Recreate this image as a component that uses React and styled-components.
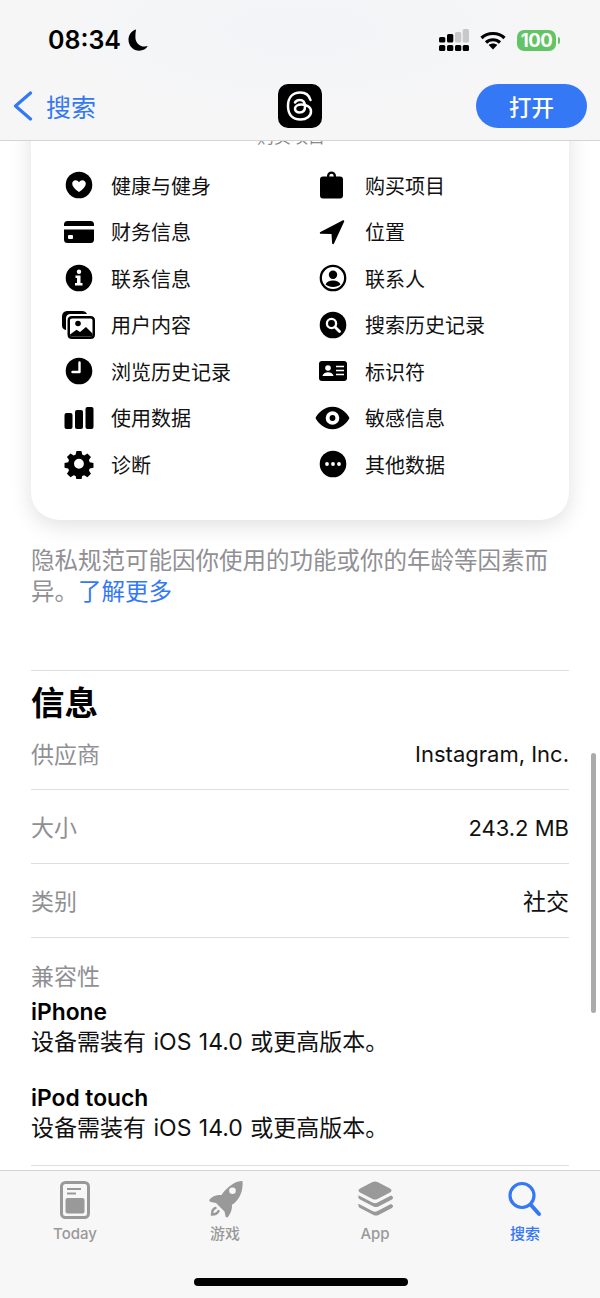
import React from 'react'
import styled, { createGlobalStyle } from 'styled-components'

const GlobalStyle = createGlobalStyle`
  html, body {
    margin: 0;
    padding: 0;
    background: #fff;
  }
  body {
    font-family: "Inter", "Noto Sans CJK SC", sans-serif;
    color: #000;
  }
`

const PRIVACY = [
  ['heart', '健康与健身', 'bag', '购买项目'],
  ['card', '财务信息', 'location', '位置'],
  ['info', '联系信息', 'contact', '联系人'],
  ['photos', '用户内容', 'search', '搜索历史记录'],
  ['clock', '浏览历史记录', 'idcard', '标识符'],
  ['bars', '使用数据', 'eye', '敏感信息'],
  ['gear', '诊断', 'more', '其他数据'],
]

const Glyph = ({ name }) => {
  switch (name) {
    case 'heart':
      return (
        <svg width="30" height="30" viewBox="0 0 30 30">
          <circle cx="15" cy="15" r="13.300" />
          <path fill="#fff" d="M15 22c-4.200-3-6.800-5.400-6.800-8.300 0-2.100 1.600-3.500 3.400-3.500 1.400 0 2.700.8 3.400 2.100.7-1.300 2-2.100 3.400-2.100 1.800 0 3.400 1.400 3.400 3.500 0 2.900-2.600 5.300-6.800 8.300z" />
        </svg>
      )
    case 'card':
      return (
        <svg width="30" height="30" viewBox="0 0 30 30">
          <path d="M3.500 4h23A3.500 3.500 0 0 1 30 7.500V9H0V7.500A3.500 3.500 0 0 1 3.500 4zM0 12.500h30v10a3.500 3.500 0 0 1-3.500 3.500h-23A3.500 3.500 0 0 1 0 22.500z" />
          <rect x="4" y="18" width="5" height="4" rx="1" fill="#fff" />
        </svg>
      )
    case 'info':
      return (
        <svg width="30" height="30" viewBox="0 0 30 30">
          <circle cx="15" cy="15" r="13.300" />
          <circle cx="15" cy="8.800" r="2.200" fill="#fff" />
          <path fill="#fff" d="M11.500 12.500h5v7.500h2v2.500h-7.500V20h2v-5h-1.500z" />
        </svg>
      )
    case 'photos':
      return (
        <svg width="33" height="28" viewBox="0 0 33 28">
          <path d="M6 0h14c2.500 0 4.200 1 5 3H8.500C5.500 3 4 4.500 4 7.500V19C1.500 18.500 0 17 0 14.500V6c0-4 2-6 6-6z" />
          <path fillRule="evenodd" d="M10 5h18.500c3 0 4.500 1.500 4.500 4.500v14c0 3-1.500 4.500-4.500 4.500H10c-3 0-4.500-1.500-4.500-4.500v-14C5.500 6.500 7 5 10 5zm0 2.500c-1.300 0-2 .7-2 2v14c0 1.300.7 2 2 2h18.500c1.300 0 2-.7 2-2v-14c0-1.300-.7-2-2-2z" />
          <circle cx="16" cy="12.500" r="2.800" />
          <path d="M8 23.500l6.500-4.800 3.500 2.400 6-5.200 6.500 6.600v1.500c0 1-.7 1.500-2 1.500H10c-1.300 0-2-.5-2-2z" />
        </svg>
      )
    case 'clock':
      return (
        <svg width="30" height="30" viewBox="0 0 30 30">
          <circle cx="15" cy="15" r="13.300" />
          <path fill="none" stroke="#fff" strokeWidth="2.400" strokeLinecap="round" strokeLinejoin="round" d="M15.500 6.500v9.500H8.500" />
        </svg>
      )
    case 'bars':
      return (
        <svg width="30" height="30" viewBox="0 0 30 30">
          <rect x="0.500" y="10" width="8" height="16" rx="2" />
          <rect x="11" y="7" width="8" height="19" rx="2" />
          <rect x="21.500" y="4" width="8" height="22" rx="2" />
        </svg>
      )
    case 'gear':
      return (
        <svg width="30" height="30" viewBox="0 0 30 30">
          <path fillRule="evenodd" d="M12.300 1.500h5.400l.8 3.900 2.200 1 3.400-2.200 3.800 3.800-2.200 3.400.9 2.200 4 .8v5.200l-4 .8-.9 2.200 2.200 3.400-3.800 3.800-3.400-2.200-2.200.9-.8 4h-5.400l-.8-4-2.200-.9-3.400 2.200-3.800-3.800 2.200-3.400-.9-2.200-3.900-.8v-5.200l3.900-.8.900-2.200-2.200-3.400 3.800-3.800 3.400 2.200 2.200-1zM15 10a5.300 5.300 0 1 0 0 10.600A5.300 5.300 0 0 0 15 10z" transform="translate(1 0.500) scale(.93)" />
        </svg>
      )
    case 'bag':
      return (
        <svg width="30" height="30" viewBox="0 0 30 30">
          <path fillRule="evenodd" d="M10.500 7V6.500a4.500 4.500 0 0 1 9 0V7h4c2 0 3 1 3 3v16c0 2-1 3-3 3h-17c-2 0-3-1-3-3V10c0-2 1-3 3-3zm2.300 0h4.400v-.5a2.200 2.200 0 0 0-4.400 0z" transform="translate(-1.500 -.5)" />
        </svg>
      )
    case 'location':
      return (
        <svg width="30" height="30" viewBox="0 0 30 30">
          <path d="M25 3.200c.8-.3 1.500.4 1.200 1.200L16 26.500c-.4 1-1.800.8-1.900-.3L13.500 17 2.800 16.800c-1.100 0-1.400-1.500-.4-1.900z" />
        </svg>
      )
    case 'contact':
      return (
        <svg width="30" height="30" viewBox="0 0 30 30">
          <circle cx="15" cy="15" r="12.200" fill="none" stroke="#000" strokeWidth="2.300" />
          <circle cx="15" cy="11.800" r="4.200" />
          <path d="M7.500 21.500c.9-2.700 4-4 7.500-4s6.600 1.300 7.500 4c-1.800 1.600-4.500 2.500-7.500 2.500s-5.700-.9-7.500-2.500z" />
        </svg>
      )
    case 'search':
      return (
        <svg width="30" height="30" viewBox="0 0 30 30">
          <circle cx="15" cy="15" r="13.300" />
          <circle cx="13.500" cy="13.500" r="4.600" fill="none" stroke="#fff" strokeWidth="2.300" />
          <path stroke="#fff" strokeWidth="2.800" strokeLinecap="round" d="M17 17l4.500 4.500" />
        </svg>
      )
    case 'idcard':
      return (
        <svg width="30" height="30" viewBox="0 0 30 30">
          <rect x="1" y="5" width="28" height="20" rx="3" />
          <circle cx="10" cy="12" r="2.800" fill="#fff" />
          <path fill="#fff" d="M4.500 20c.3-2.500 2.700-3.800 5.500-3.800s5.200 1.300 5.500 3.800z" />
          <path stroke="#fff" strokeWidth="1.700" d="M18 10.500h8M18 14.500h8M18 18.500h8" />
        </svg>
      )
    case 'eye':
      return (
        <svg width="36" height="30" viewBox="0 0 36 30">
          <path fillRule="evenodd" d="M18 3.500c8.500 0 14.800 6.300 17.500 11.500C32.800 20.200 26.500 26.500 18 26.500S3.200 20.200.5 15C3.200 9.800 9.500 3.500 18 3.500zm0 4.500a7 7 0 1 0 0 14 7 7 0 0 0 0-14z" />
          <circle cx="18" cy="15" r="3" />
        </svg>
      )
    case 'more':
      return (
        <svg width="30" height="30" viewBox="0 0 30 30">
          <circle cx="15" cy="15" r="13.300" />
          <circle cx="9" cy="15" r="1.900" fill="#fff" />
          <circle cx="15" cy="15" r="1.900" fill="#fff" />
          <circle cx="21" cy="15" r="1.900" fill="#fff" />
        </svg>
      )
    default:
      return null
  }
}

const App = () => {
  return (
    <Page>
      <GlobalStyle />
      <Header>
        <StatusBar>
          <Clock>
            08:34
            <svg width="20" height="22" viewBox="0 0 20 22">
              <path d="M8 .5C3.500 1.800.5 5.800.5 10.800.5 16.900 5.300 21.800 11.300 21.800c3.700 0 6.800-1.800 8.500-4.700-1 .3-2 .5-3 .5-5.400 0-9.400-4.200-9.400-9.400C7.400 5.800 7.500 3 8 .5z" />
            </svg>
          </Clock>
          <StatusIcons>
            <svg width="30" height="22" viewBox="0 0 30 22">
              <rect x="0" y="8" width="6.300" height="5.500" rx="1.500" />
              <rect x="0" y="16" width="6.300" height="6" rx="1.500" />
              <rect x="8" y="5" width="6.300" height="8.500" rx="1.500" />
              <rect x="8" y="16" width="6.300" height="6" rx="1.500" />
              <rect x="16" y="3" width="6.300" height="10.500" rx="1.500" fill="#c8c8c8" />
              <rect x="16" y="16" width="6.300" height="6" rx="1.500" />
              <rect x="23.700" y="0" width="6.300" height="13.500" rx="1.500" fill="#c8c8c8" />
              <rect x="23.700" y="16" width="6.300" height="6" rx="1.500" />
            </svg>
            <svg width="26" height="19" viewBox="0 0 26 19">
              <path fill="none" stroke="#000" strokeWidth="3.200" d="M1.500 7C7.500 1 18.500 1 24.500 7M6 11.500c4-3.700 10-3.700 14 0" />
              <path d="M13 18.500l-4.300-4.400c2.400-2 6.200-2 8.600 0z" />
            </svg>
            <Battery>
              100
              <BatteryTip />
            </Battery>
          </StatusIcons>
        </StatusBar>
        <NavBar>
          <BackLink>
            <svg width="20" height="30" viewBox="0 0 20 30">
              <path fill="none" stroke="#3478f6" strokeWidth="3.200" strokeLinecap="round" strokeLinejoin="round" d="M17.500 2L2.500 15l15 13" />
            </svg>
            <span>搜索</span>
          </BackLink>
          <AppIcon>
            <svg width="28" height="30" viewBox="0 0 28 30">
              <path fill="none" stroke="#fff" strokeWidth="2.500" strokeLinecap="round" d="M24.500 9C23 4 19.500 1.500 14.500 1.500 6.500 1.500 2 6.500 2 15s4.500 13.500 12.500 13.500c6 0 10.500-3.500 10.500-8 0-4.500-4.500-7-9.500-7-4 0-6.500 1.800-6.500 4.300 0 2.300 2 3.700 4.500 3.700 3.500 0 5.500-2.300 5.500-6 0-4-2-6.500-5.300-6.500-2.200 0-3.700.8-4.700 2.500" />
            </svg>
          </AppIcon>
          <OpenButton>打开</OpenButton>
        </NavBar>
      </Header>

      <Scroller>
        <PrivacyCard>
          <CardTitle>购买项目</CardTitle>
          <PrivacyGrid>
            {PRIVACY.map(([lIcon, lText, rIcon, rText]) => (
              <React.Fragment key={lText}>
                <PrivacyItem>
                  <IconSlot><Glyph name={lIcon} /></IconSlot>
                  <span>{lText}</span>
                </PrivacyItem>
                <PrivacyItem>
                  <IconSlot><Glyph name={rIcon} /></IconSlot>
                  <span>{rText}</span>
                </PrivacyItem>
              </React.Fragment>
            ))}
          </PrivacyGrid>
        </PrivacyCard>

        <Note>
          隐私规范可能因你使用的功能或你的年龄等因素而异。<NoteLink>了解更多</NoteLink>
        </Note>

        <InfoSection>
          <SectionTitle>信息</SectionTitle>
          <InfoRow $first>
            <InfoLabel>供应商</InfoLabel>
            <InfoValue>Instagram, Inc.</InfoValue>
          </InfoRow>
          <InfoRow>
            <InfoLabel>大小</InfoLabel>
            <InfoValue>243.2 MB</InfoValue>
          </InfoRow>
          <InfoRow>
            <InfoLabel>类别</InfoLabel>
            <InfoValue $cjk>社交</InfoValue>
          </InfoRow>
          <CompatBlock>
            <InfoLabel>兼容性</InfoLabel>
            <Device>
              <DeviceName>iPhone</DeviceName>
              <DeviceText>设备需装有 iOS 14.0 或更高版本。</DeviceText>
            </Device>
            <Device>
              <DeviceName>iPod touch</DeviceName>
              <DeviceText>设备需装有 iOS 14.0 或更高版本。</DeviceText>
            </Device>
          </CompatBlock>
        </InfoSection>
        <ScrollThumb />
      </Scroller>

      <TabBar>
        <Tabs>
          <Tab>
            <svg width="34" height="40" viewBox="0 0 34 40">
              <rect x="3.500" y="1.500" width="27" height="35" rx="4" fill="none" stroke="#999" strokeWidth="3" />
              <rect x="9" y="7" width="14" height="2" fill="#999" />
              <rect x="9" y="11.500" width="9" height="2" fill="#999" />
              <rect x="7.500" y="17" width="19" height="15.500" rx="2" fill="#999" />
            </svg>
            <TabLabel>Today</TabLabel>
          </Tab>
          <Tab>
            <svg width="38" height="40" viewBox="0 0 38 40">
              <path fill="#999" fillRule="evenodd" d="M36.500 0c.6 7-1 15-7 21-1 1-2 1.800-3.500 2.700.3 4-1 8-3.500 11.500-1 1.500-2.500 1.800-3-.2l-1-4.500-8.500-8.500-5-1c-1.900-.4-2.300-1.600-1-3 3-3 7-4.500 11.500-4 1-1.600 2-3 3.200-4.200C24.500 4 29.500 0 36.500 0zM26.500 6.500a3.300 3.300 0 1 0 0 6.600 3.300 3.300 0 0 0 0-6.600z" />
              <path fill="none" stroke="#999" strokeWidth="2.400" strokeLinecap="round" d="M9.500 27c-2 .5-3.500 2.500-3.500 6.500 3.500 0 5.500-1 6.500-3.500" />
            </svg>
            <TabLabel>游戏</TabLabel>
          </Tab>
          <Tab>
            <svg width="38" height="40" viewBox="0 0 36 40">
              <path fill="#999" d="M15.500 1c1.600-.8 3.400-.8 5 0l12.500 6.500c2 1 2 3 0 4L20.500 18c-1.600.8-3.400.8-5 0L3 11.500c-2-1-2-3 0-4z" />
              <path fill="#999" d="M.5 15.500l1.500-1 14 7.200c1.300.6 2.700.6 4 0l14-7.200 1.500 1c1 1 .6 2.300-1 3.200l-13 6.700c-1.600.8-3.400.8-5 0l-13-6.700c-1.600-.9-3-2.200-1.500-3.200z" />
              <path fill="#999" d="M.5 24l1.500-1 14 7.200c1.300.6 2.700.6 4 0l14-7.200 1.500 1c1 1 .6 2.300-1 3.200l-13 6.700c-1.600.8-3.400.8-5 0l-13-6.700c-1.600-.9-3-2.200-1.500-3.200z" />
            </svg>
            <TabLabel>App</TabLabel>
          </Tab>
          <Tab>
            <svg width="36" height="40" viewBox="0 0 36 40">
              <circle cx="15" cy="14.500" r="12" fill="none" stroke="#3478f6" strokeWidth="3.200" />
              <path stroke="#3478f6" strokeWidth="4" strokeLinecap="round" d="M24 24l8 9" />
            </svg>
            <TabLabel $active>搜索</TabLabel>
          </Tab>
        </Tabs>
        <HomeIndicator />
      </TabBar>
    </Page>
  )
}

const Page = styled.div`
  width: 600px;
  height: 1298px;
  display: flex;
  flex-direction: column;
  overflow: hidden;
  background: #fff;
`

const Header = styled.header`
  flex: none;
  height: 141px;
  box-sizing: border-box;
  background: radial-gradient(ellipse 260px 90px at 300px 30px, #f2f4f7, #f6f6f7);
  border-bottom: 1px solid #d4d4d6;
  display: flex;
  flex-direction: column;
  position: relative;
  z-index: 1;
`

const StatusBar = styled.div`
  flex: none;
  box-sizing: border-box;
  height: 84px;
  padding: 0 40px 4px 48px;
  display: flex;
  justify-content: space-between;
  align-items: center;
`

const Clock = styled.div`
  display: flex;
  align-items: center;
  gap: 7px;
  font-size: 25px;
  font-weight: 600;
  font-family: "Inter", sans-serif;
`

const StatusIcons = styled.div`
  display: flex;
  align-items: center;
  gap: 11px;
`

const Battery = styled.div`
  position: relative;
  width: 39px;
  height: 21px;
  border-radius: 7px;
  background: #63c466;
  color: #fff;
  font-size: 18.500px;
  font-weight: 700;
  letter-spacing: -0.5px;
  line-height: 21px;
  text-align: center;
  margin-right: 4px;
`

const BatteryTip = styled.span`
  position: absolute;
  right: -4px;
  top: 7px;
  width: 2px;
  height: 7px;
  border-radius: 0 2px 2px 0;
  background: #63c466;
`

const NavBar = styled.div`
  flex: none;
  height: 44px;
  padding: 0 13px 0 13px;
  display: grid;
  grid-template-columns: 1fr 44px 1fr;
  align-items: center;
`

const BackLink = styled.div`
  display: flex;
  align-items: center;
  gap: 13px;
  color: #3478f6;
  font-size: 25px;
  line-height: 44px;
  font-family: "Noto Sans CJK SC", sans-serif;
  svg {
    flex: none;
  }
`

const AppIcon = styled.div`
  width: 44px;
  height: 44px;
  border-radius: 10px;
  background: #000;
  display: flex;
  align-items: center;
  justify-content: center;
`

const OpenButton = styled.div`
  justify-self: end;
  width: 111px;
  height: 44px;
  border-radius: 22px;
  background: #3478f6;
  color: #fff;
  font-size: 22.500px;
  font-weight: 500;
  font-family: "Noto Sans CJK SC", sans-serif;
  display: flex;
  align-items: center;
  justify-content: center;
`

const Scroller = styled.main`
  flex: 1;
  min-height: 0;
  position: relative;
  overflow: hidden;
  padding: 0 31px;
`

const PrivacyCard = styled.section`
  margin-top: -40px;
  padding: 22px 30px 32px;
  background: #fff;
  border-radius: 28px;
  box-shadow: 0 6px 22px rgba(0, 0, 0, 0.12);
`

const CardTitle = styled.div`
  height: 25px;
  text-align: center;
  color: #8a8a8e;
  font-size: 17px;
  line-height: 25px;
  font-family: "Noto Sans CJK SC", sans-serif;
  margin-bottom: 14px;
  padding-right: 18px;
`

const PrivacyGrid = styled.div`
  display: grid;
  grid-template-columns: 254px 1fr;
  grid-auto-rows: 46.500px;
`

const PrivacyItem = styled.div`
  display: flex;
  align-items: center;
  gap: 15px;
  font-size: 20px;
  font-family: "Noto Sans CJK SC", sans-serif;
  color: #111;
`

const IconSlot = styled.span`
  width: 35px;
  display: flex;
  justify-content: center;
  svg {
    display: block;
  }
`

const Note = styled.p`
  margin: 24px 0 0;
  color: #909094;
  font-size: 23.500px;
  line-height: 31px;
  font-family: "Noto Sans CJK SC", sans-serif;
`

const NoteLink = styled.span`
  color: #3478f6;
`

const InfoSection = styled.section`
  margin-top: 64px;
  border-top: 1px solid #dedee0;
`

const SectionTitle = styled.h2`
  margin: 0;
  padding-top: 8px;
  font-size: 33.500px;
  line-height: 44px;
  font-weight: 700;
  font-family: "Noto Sans CJK SC", sans-serif;
`

const InfoRow = styled.div`
  display: flex;
  justify-content: space-between;
  align-items: center;
  box-sizing: border-box;
  height: ${p => (p.$first ? '67px' : '74px')};
  padding-bottom: ${p => (p.$first ? '6px' : '0')};
  border-bottom: 1px solid #dedee0;
`

const InfoLabel = styled.div`
  color: #909094;
  font-size: 23px;
  font-family: "Noto Sans CJK SC", sans-serif;
`

const InfoValue = styled.div`
  font-size: ${p => (p.$cjk ? '23px' : '22px')};
  padding-top: ${p => (p.$cjk ? '0' : '3px')};
  color: #111;
`

const CompatBlock = styled.div`
  padding-top: 20px;
  padding-bottom: 21px;
  border-bottom: 1px solid #dedee0;
`

const Device = styled.div`
  margin-top: 4px;
  & + & {
    margin-top: 24px;
  }
`

const DeviceName = styled.div`
  font-size: 22.800px;
  font-weight: 600;
  line-height: 31px;
`

const DeviceText = styled.div`
  font-size: 23px;
  line-height: 31px;
  color: #111;
  word-spacing: 1px;
`

const ScrollThumb = styled.div`
  position: absolute;
  right: 4px;
  top: 612px;
  width: 5px;
  height: 260px;
  border-radius: 3px;
  background: #ababab;
`

const TabBar = styled.footer`
  flex: none;
  height: 128px;
  box-sizing: border-box;
  background: #f7f7f7;
  border-top: 1px solid #d4d4d6;
  position: relative;
`

const Tabs = styled.div`
  display: grid;
  grid-template-columns: repeat(4, 150px);
  padding-top: 10px;
`

const Tab = styled.div`
  display: flex;
  flex-direction: column;
  align-items: center;
  gap: 2px;
`

const TabLabel = styled.div`
  font-size: 15px;
  line-height: 22px;
  font-weight: 500;
  color: ${p => (p.$active ? '#3478f6' : '#999')};
  font-family: "Inter", "Noto Sans CJK SC", sans-serif;
`

const HomeIndicator = styled.div`
  position: absolute;
  left: 194px;
  bottom: 12px;
  width: 214px;
  height: 8px;
  border-radius: 4px;
  background: #000;
`

export default App
